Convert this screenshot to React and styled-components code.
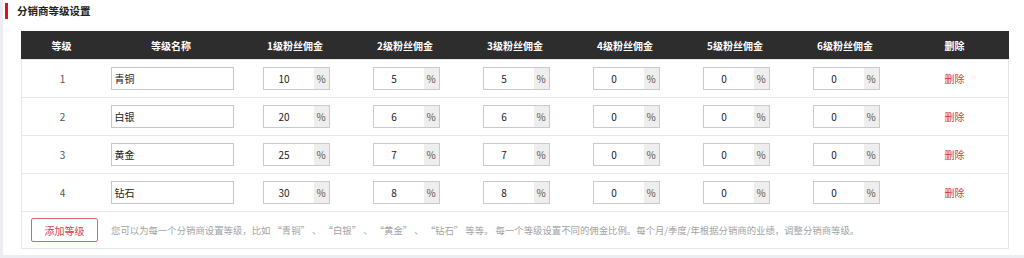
import React from "react";
import styled, { createGlobalStyle } from "styled-components";

const GlobalStyle = createGlobalStyle`
  body {
    margin: 0;
    background: #ececf3;
    font-family: "Noto Sans CJK SC", "Noto Sans", sans-serif;
  }
`;

const Panel = styled.div`
  margin-left: 3px;
  height: 255px;
  background: #fff;
  padding: 3px 0 0 2px;
  box-sizing: border-box;
`;

const Title = styled.div`
  border-left: 3px solid #d7141e;
  padding-left: 9px;
  height: 16px;
  line-height: 16px;
  font-size: 10.5px;
  font-weight: bold;
  color: #222;
`;

const Table = styled.div`
  margin: 12px 0 0 16px;
  width: 988px;
  border: 1px solid #e6e6e6;
  border-top: none;
  box-sizing: border-box;
`;

const Row = styled.div`
  display: grid;
  grid-template-columns: 81px 138px repeat(6, 110px) 1fr;
  align-items: center;
  height: ${(p) => (p.$head ? "28px" : "37px")};
  background: ${(p) => (p.$head ? "#2d2d2d" : "#fff")};
  border-top: ${(p) => (p.$head ? "none" : "1px solid #e8e8e8")};
  margin: ${(p) => (p.$head ? "0 -1px" : "0")};
`;

const HeadCell = styled.div`
  text-align: center;
  color: #fff;
  font-size: 10px;
  font-weight: bold;
`;

const Cell = styled.div`
  display: flex;
  justify-content: center;
  align-items: center;
  font-size: 10px;
  color: ${(p) => p.$color || "#444"};
`;

const NameInput = styled.div`
  width: 123px;
  height: 23px;
  box-sizing: border-box;
  border: 1px solid #c6c6c6;
  padding-left: 3px;
  font-size: 10px;
  line-height: 21px;
  color: #222;
`;

const PercentGroup = styled.div`
  display: flex;
  width: 67px;
  height: 23px;
  box-sizing: border-box;
  border: 1px solid #cacaca;
`;

const PercentValue = styled.div`
  width: 50px;
  padding-right: 9px;
  box-sizing: border-box;
  text-align: center;
  line-height: 21px;
  font-size: 10px;
  color: #222;
`;

const PercentAddon = styled.div`
  flex: 1;
  background: #eeeeee;
  text-align: center;
  line-height: 21px;
  font-size: 10px;
  color: #555;
`;

const DeleteLink = styled.span`
  color: #d9363e;
  font-size: 10px;
  cursor: pointer;
`;

const Footer = styled.div`
  display: flex;
  align-items: center;
  height: 36px;
  border-top: 1px solid #e8e8e8;
  padding-left: 9px;
`;

const AddButton = styled.button`
  width: 67px;
  height: 24px;
  border: 1px solid #e06565;
  border-radius: 2px;
  background: #fff;
  color: #e0404a;
  font-family: inherit;
  font-size: 10px;
  padding: 0;
  margin-right: 13px;
`;

const Help = styled.span`
  font-size: 9.4px;
  color: #a3a3a3;
  white-space: nowrap;
`;

const levels = [
  { name: "青铜", rates: [10, 5, 5, 0, 0, 0] },
  { name: "白银", rates: [20, 6, 6, 0, 0, 0] },
  { name: "黄金", rates: [25, 7, 7, 0, 0, 0] },
  { name: "钻石", rates: [30, 8, 8, 0, 0, 0] },
];

const heads = ["等级", "等级名称", "1级粉丝佣金", "2级粉丝佣金", "3级粉丝佣金", "4级粉丝佣金", "5级粉丝佣金", "6级粉丝佣金", "删除"];

export default function App() {
  return (
    <>
      <GlobalStyle />
      <Panel>
        <Title>分销商等级设置</Title>
        <Table>
          <Row $head>
            {heads.map((h) => (
              <HeadCell key={h}>{h}</HeadCell>
            ))}
          </Row>
          {levels.map((lv, i) => (
            <Row key={lv.name}>
              <Cell $color="#555">{i + 1}</Cell>
              <Cell>
                <NameInput>{lv.name}</NameInput>
              </Cell>
              {lv.rates.map((r, j) => (
                <Cell key={j}>
                  <PercentGroup>
                    <PercentValue>{r}</PercentValue>
                    <PercentAddon>%</PercentAddon>
                  </PercentGroup>
                </Cell>
              ))}
              <Cell>
                <DeleteLink>删除</DeleteLink>
              </Cell>
            </Row>
          ))}
          <Footer>
            <AddButton>添加等级</AddButton>
            <Help>
              您可以为每一个分销商设置等级，比如 “青铜” 、 “白银” 、 “黄金” 、 “钻石” 等等。 每一个等级设置不同的佣金比例。每个月/季度/年根据分销商的业绩，调整分销商等级。
            </Help>
          </Footer>
        </Table>
      </Panel>
    </>
  );
}
